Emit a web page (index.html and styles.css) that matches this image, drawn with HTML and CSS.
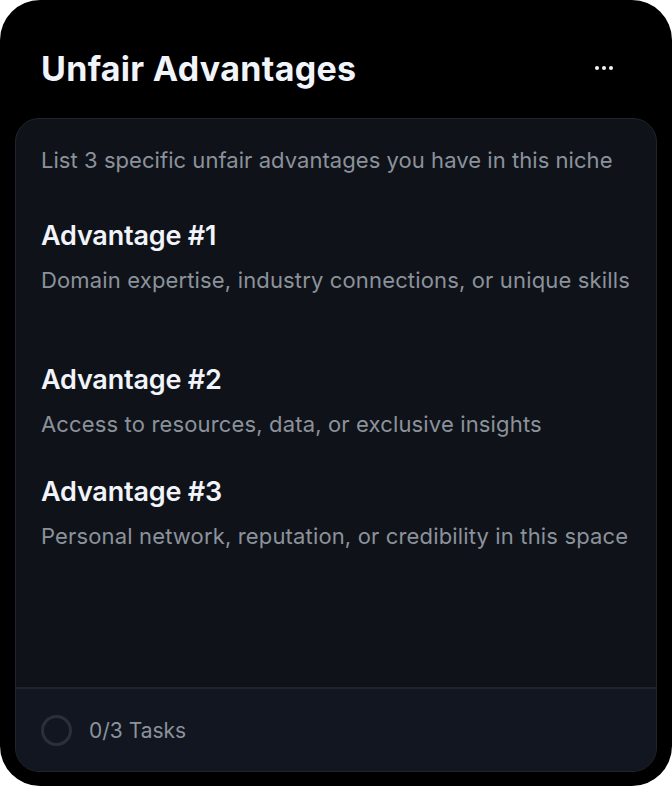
FILE: index.html
```html
<!doctype html>
<html lang="en">
  <head>
    <meta charset="UTF-8" />
    <meta name="viewport" content="width=device-width, initial-scale=1.0" />
    <title>Unfair Advantages</title>
    <link rel="stylesheet" href="styles.css">
  </head>
  <body>
    <div class="widget">
      <div class="header">
        <h1 class="title">Unfair Advantages</h1>
        <button class="menu-btn" aria-label="More options">
          <svg width="18" height="4" viewBox="0 0 18 4">
            <circle cx="2" cy="2" r="2" fill="#f1f4fa" />
            <circle cx="9" cy="2" r="2" fill="#f1f4fa" />
            <circle cx="16" cy="2" r="2" fill="#f1f4fa" />
          </svg>
        </button>
      </div>

      <div class="card">
        <div class="card-body">
          <p class="prompt">List 3 specific unfair advantages you have in this niche</p>

          <div class="item item-first">
            <h2 class="item-title">Advantage #1</h2>
            <p class="item-desc">Domain expertise, industry connections, or unique skills</p>
          </div>

          <div class="item">
            <h2 class="item-title">Advantage #2</h2>
            <p class="item-desc">Access to resources, data, or exclusive insights</p>
          </div>

          <div class="item">
            <h2 class="item-title">Advantage #3</h2>
            <p class="item-desc">Personal network, reputation, or credibility in this space</p>
          </div>
        </div>

        <div class="card-footer">
          <span class="progress-ring"></span>
          <span class="progress-label">0/3 Tasks</span>
        </div>
      </div>
    </div>
  </body>
</html>
```

FILE: styles.css
```css
:root {
  --bg: #000000;
  --card: #0f1218;
  --card-footer: #121620;
  --border: #20242c;
  --text: #f1f4fa;
  --muted: #8b929b;
}

* {
  margin: 0;
  padding: 0;
  box-sizing: border-box;
}

html,
body {
  background: #ffffff;
}

body {
  font-family: "Inter", "Open Sans", "Liberation Sans", sans-serif;
  -webkit-font-smoothing: antialiased;
}

.widget {
  width: 672px;
  height: 786px;
  background: var(--bg);
  border-radius: 40px;
  padding: 0 15px 14px;
  display: flex;
  flex-direction: column;
}

.header {
  height: 118px;
  display: flex;
  align-items: center;
  justify-content: space-between;
  padding: 0 44px 0 26px;
}

.title {
  color: var(--text);
  font-size: 34px;
  font-weight: 700;
  letter-spacing: 0.3px;
  margin-top: 18px;
}

.menu-btn {
  background: none;
  border: none;
  display: flex;
  align-items: center;
  margin-top: 18px;
  cursor: pointer;
}

.card {
  flex: 1;
  background: var(--card);
  border: 1px solid var(--border);
  border-radius: 24px;
  display: flex;
  flex-direction: column;
  overflow: hidden;
}

.card-body {
  flex: 1;
  padding: 26px 25px 0;
}

.prompt {
  color: var(--muted);
  font-size: 22px;
  letter-spacing: 0.05px;
  line-height: 30px;
}

.item {
  margin-top: 37px;
}

.item-first {
  margin-top: 45px;
  padding-bottom: 32px;
}

.item-title {
  color: var(--text);
  font-size: 27px;
  font-weight: 600;
  letter-spacing: -0.2px;
  line-height: 32px;
}

.item-desc {
  color: var(--muted);
  font-size: 22px;
  letter-spacing: 0.15px;
  line-height: 30px;
  margin-top: 13px;
}

.card-footer {
  height: 84px;
  border-top: 2px solid var(--border);
  background: var(--card-footer);
  display: flex;
  align-items: center;
  gap: 17px;
  padding: 0 25px;
}

.progress-ring {
  width: 31px;
  height: 31px;
  border: 3px solid #2b3038;
  border-radius: 50%;
}

.progress-label {
  color: var(--muted);
  font-size: 21px;
}
```
